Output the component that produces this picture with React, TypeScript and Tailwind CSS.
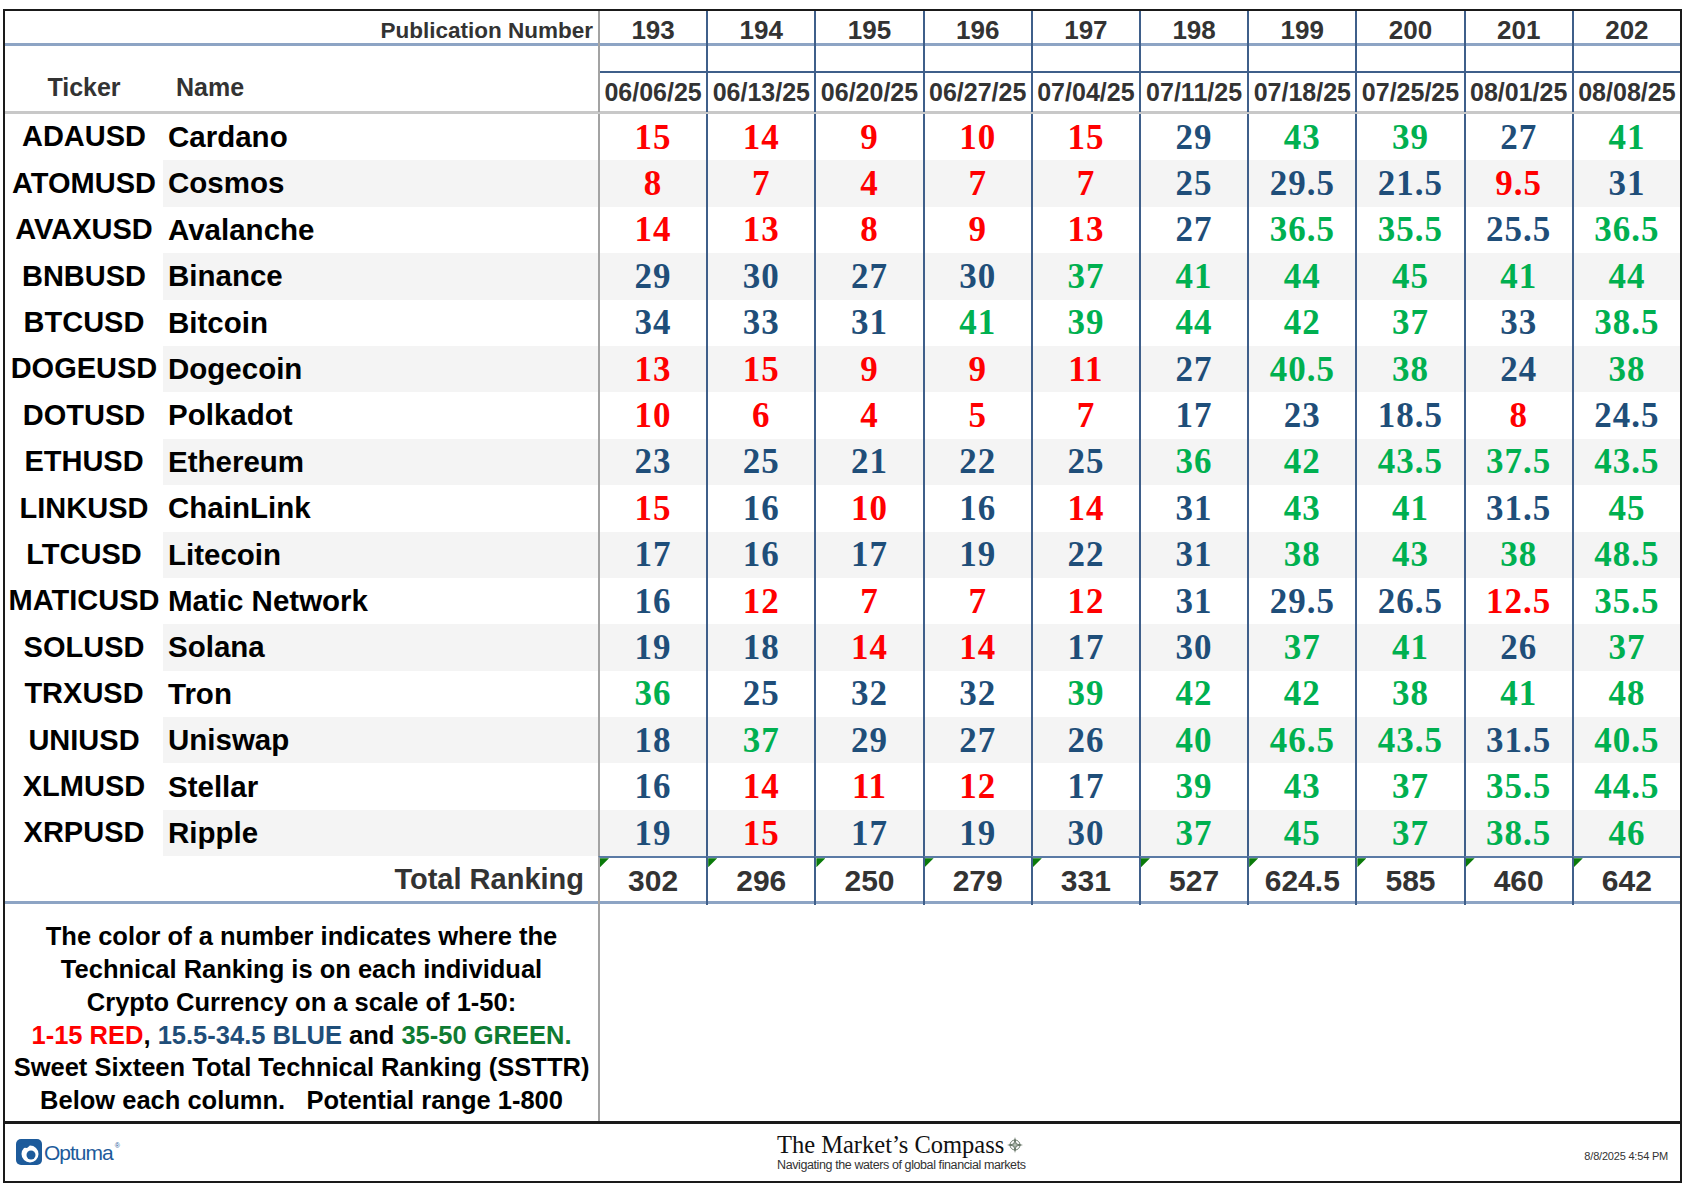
const pubs = [193, 194, 195, 196, 197, 198, 199, 200, 201, 202];
const dates = ['06/06/25', '06/13/25', '06/20/25', '06/27/25', '07/04/25', '07/11/25', '07/18/25', '07/25/25', '08/01/25', '08/08/25'];
const totals = ['302', '296', '250', '279', '331', '527', '624.5', '585', '460', '642'];

const rows: [string, string, number[]][] = [
  ['ADAUSD', 'Cardano', [15, 14, 9, 10, 15, 29, 43, 39, 27, 41]],
  ['ATOMUSD', 'Cosmos', [8, 7, 4, 7, 7, 25, 29.5, 21.5, 9.5, 31]],
  ['AVAXUSD', 'Avalanche', [14, 13, 8, 9, 13, 27, 36.5, 35.5, 25.5, 36.5]],
  ['BNBUSD', 'Binance', [29, 30, 27, 30, 37, 41, 44, 45, 41, 44]],
  ['BTCUSD', 'Bitcoin', [34, 33, 31, 41, 39, 44, 42, 37, 33, 38.5]],
  ['DOGEUSD', 'Dogecoin', [13, 15, 9, 9, 11, 27, 40.5, 38, 24, 38]],
  ['DOTUSD', 'Polkadot', [10, 6, 4, 5, 7, 17, 23, 18.5, 8, 24.5]],
  ['ETHUSD', 'Ethereum', [23, 25, 21, 22, 25, 36, 42, 43.5, 37.5, 43.5]],
  ['LINKUSD', 'ChainLink', [15, 16, 10, 16, 14, 31, 43, 41, 31.5, 45]],
  ['LTCUSD', 'Litecoin', [17, 16, 17, 19, 22, 31, 38, 43, 38, 48.5]],
  ['MATICUSD', 'Matic Network', [16, 12, 7, 7, 12, 31, 29.5, 26.5, 12.5, 35.5]],
  ['SOLUSD', 'Solana', [19, 18, 14, 14, 17, 30, 37, 41, 26, 37]],
  ['TRXUSD', 'Tron', [36, 25, 32, 32, 39, 42, 42, 38, 41, 48]],
  ['UNIUSD', 'Uniswap', [18, 37, 29, 27, 26, 40, 46.5, 43.5, 31.5, 40.5]],
  ['XLMUSD', 'Stellar', [16, 14, 11, 12, 17, 39, 43, 37, 35.5, 44.5]],
  ['XRPUSD', 'Ripple', [19, 15, 17, 19, 30, 37, 45, 37, 38.5, 46]],
];

// ranking colour bands: 1-15 red, 15.5-34.5 blue, 35-50 green
const tone = (v: number) => (v <= 15 ? 'text-[#ff0000]' : v < 35 ? 'text-[#1f4e79]' : 'text-[#00b050]');
const line = (i: number) => (i === 0 ? 'border-l-2 border-l-[#a3a3a3]' : 'border-l-2 border-l-[#3f5f8a]');

const OptumaLogo = () => (
  <div className="flex items-center gap-[2px]">
    <svg width="26" height="26" viewBox="0 0 26 26">
      <rect x="0" y="0" width="26" height="26" rx="5" fill="#1d5b9b" />
      <circle cx="14" cy="15" r="8.5" fill="#fff" />
      <circle cx="15" cy="16" r="4.5" fill="#1d5b9b" />
      <path d="M3 5 Q9 4 14 6.5 L11 9 Q7 8 3 9 Z" fill="#1d5b9b" />
    </svg>
    <span className="font-['Liberation_Sans',Arial,sans-serif] text-[21px] leading-none text-[#1d5b9b] tracking-[-1px]">
      Optuma
    </span>
    <span className="self-start mt-[2px] text-[7px] text-[#1d5b9b]">®</span>
  </div>
);

const CompassIcon = () => (
  <svg width="18" height="18" viewBox="0 0 18 18">
    <circle cx="9" cy="9" r="5" fill="none" stroke="#6f7f6f" strokeWidth="1" />
    <path d="M9 1 L10.5 7.5 L17 9 L10.5 10.5 L9 17 L7.5 10.5 L1 9 L7.5 7.5 Z" fill="#4f5f4f" />
    <path d="M9 4 L9.8 8.2 L14 9 L9.8 9.8 L9 14 L8.2 9.8 L4 9 L8.2 8.2 Z" fill="#b9c4b9" />
  </svg>
);

export default function App() {
  return (
    <div className="min-h-screen bg-white pt-[9px] pl-[3px]">
      <div className="w-[1679px] border-2 border-[#1a1a1a] bg-white font-['Liberation_Sans',Arial,sans-serif]">
        {/* publication number row */}
        <div className="grid grid-cols-[158px_435px_repeat(10,minmax(0,1fr))] h-[35px] border-b-[3px] border-b-[#8da4c4]">
          <div className="col-span-2 flex items-center justify-end pr-[5px] pb-[6px] text-[22.5px] font-bold text-[#333]">
            Publication Number
          </div>
          {pubs.map((p, i) => (
            <div key={p} className={`${line(i)} flex items-center justify-center pb-[6px] text-[26px] font-bold text-[#333]`}>
              {p}
            </div>
          ))}
        </div>

        {/* date rows */}
        <div className="grid grid-cols-[158px_435px_repeat(10,minmax(0,1fr))] h-[68px] border-b-[3px] border-b-[#c8c8c8]">
          <div className="flex items-end justify-center pb-[5px] text-[25px] font-bold text-[#333]">Ticker</div>
          <div className="flex items-end pl-[13px] pb-[5px] text-[25px] font-bold text-[#333]">Name</div>
          {dates.map((d, i) => (
            <div key={d} className={`${line(i)} flex flex-col`}>
              <div className="h-[27px] border-b-2 border-b-[#3f5f8a]" />
              <div className="flex flex-1 items-center justify-center pt-[1px] text-[25px] font-bold text-[#333] whitespace-nowrap">
                {d}
              </div>
            </div>
          ))}
        </div>

        {/* data rows */}
        {rows.map(([ticker, name, vals], r) => {
          const shade = r % 2 === 1 ? 'bg-[#f4f4f4]' : 'bg-white';
          return (
            <div key={ticker} className="grid grid-cols-[158px_435px_repeat(10,minmax(0,1fr))] h-[46.4px]">
              <div className="flex items-center justify-center text-[29px] font-bold text-black whitespace-nowrap">
                {ticker}
              </div>
              <div className={`${shade} flex items-center pl-[5px] text-[29.5px] font-bold text-black`}>{name}</div>
              {vals.map((v, i) => (
                <div
                  key={i}
                  className={`${line(i)} ${shade} ${tone(v)} flex items-center justify-center font-['Liberation_Serif','Times_New_Roman',serif] text-[35px] font-bold leading-none tracking-[1px]`}
                >
                  {v}
                </div>
              ))}
            </div>
          );
        })}

        {/* total row */}
        <div className="grid grid-cols-[158px_435px_repeat(10,minmax(0,1fr))] h-[48px] border-b-[3px] border-b-[#8da4c4]">
          <div className="col-span-2 flex items-center justify-end pr-[14px] pb-[2px] text-[29px] font-bold text-[#333]">
            Total Ranking
          </div>
          {totals.map((t, i) => (
            <div
              key={i}
              className={`${line(i)} relative flex items-center justify-center border-t-2 border-t-[#5a7aa5] pb-[2px] text-[30px] font-bold text-[#333]`}
            >
              <span className="absolute left-0 top-0 h-[9px] w-[9px] bg-[#0a7a0a] [clip-path:polygon(0_0,100%_0,0_100%)]" />
              {t}
            </div>
          ))}
        </div>

        {/* legend */}
        <div className="flex h-[216.6px]">
          <div className="flex w-[593px] flex-col items-center justify-center pt-[12px] text-[25.5px] font-bold leading-[32.7px] text-black whitespace-nowrap">
            <div>The color of a number indicates where the</div>
            <div>Technical Ranking is on each individual</div>
            <div>Crypto Currency on a scale of 1-50:</div>
            <div>
              <span className="text-[#ff0000]">1-15 RED</span>, <span className="text-[#1f4e79]">15.5-34.5 BLUE</span> and{' '}
              <span className="text-[#0f7b32]">35-50 GREEN.</span>
            </div>
            <div>Sweet Sixteen Total Technical Ranking (SSTTR)</div>
            <div>Below each column.&nbsp;&nbsp; Potential range 1-800</div>
          </div>
          <div className="flex-1 border-l-2 border-l-[#a3a3a3]" />
        </div>

        {/* footer */}
        <div className="grid h-[60px] grid-cols-[772px_1fr_auto] items-center border-t-[3px] border-t-[#1a1a1a]">
          <div className="pl-[11px]">
            <OptumaLogo />
          </div>
          <div className="flex flex-col">
            <div className="flex items-center gap-[2px]">
              <span className="font-['Liberation_Serif','Times_New_Roman',serif] text-[24.5px] leading-[26px] text-[#111]">
                The Market’s Compass
              </span>
              <CompassIcon />
            </div>
            <span className="text-[12.5px] leading-[15px] tracking-[-0.4px] text-[#333]">
              Navigating the waters of global financial markets
            </span>
          </div>
          <div className="pr-[12px] pt-[8px] text-[11px] tracking-[-0.2px] text-[#333]">8/8/2025 4:54 PM</div>
        </div>
      </div>
    </div>
  );
}
